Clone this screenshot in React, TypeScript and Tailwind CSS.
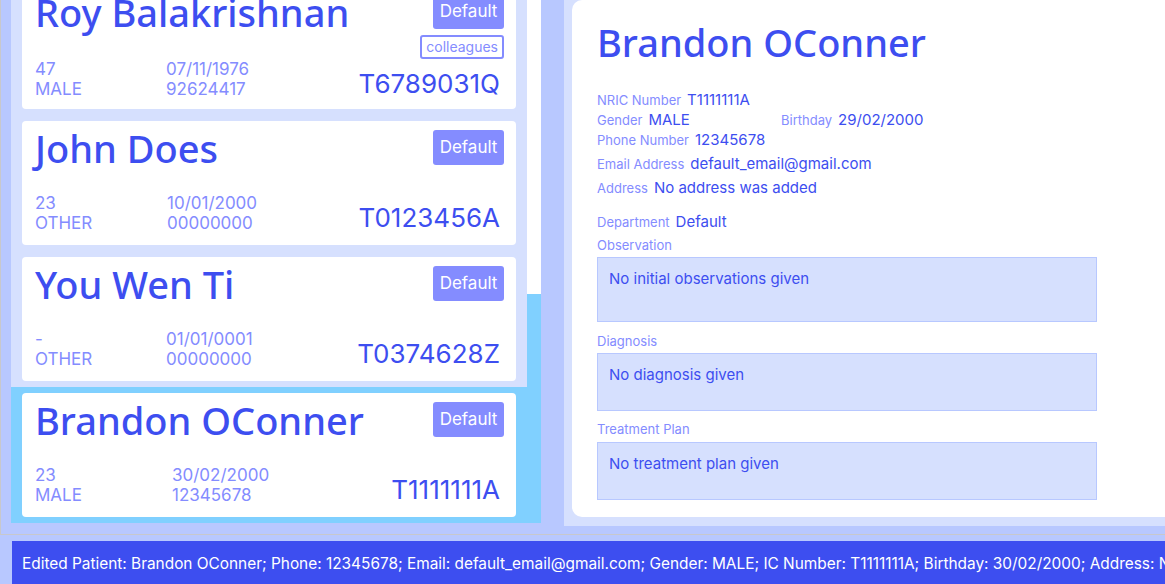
import React from 'react';

interface Patient {
  name: string;
  age: string;
  gender: string;
  birthday: string;
  phone: string;
  nric: string;
  tags: string[];
  colWidth: string;
  selected?: boolean;
}

const patients: Patient[] = [
  { name: 'Roy Balakrishnan', age: '47', gender: 'MALE', birthday: '07/11/1976', phone: '92624417', nric: 'T6789031Q', tags: ['colleagues'], colWidth: 'w-[131px]' },
  { name: 'John Does', age: '23', gender: 'OTHER', birthday: '10/01/2000', phone: '00000000', nric: 'T0123456A', tags: [], colWidth: 'w-[132px]' },
  { name: 'You Wen Ti', age: '-', gender: 'OTHER', birthday: '01/01/0001', phone: '00000000', nric: 'T0374628Z', tags: [], colWidth: 'w-[131px]' },
  { name: 'Brandon OConner', age: '23', gender: 'MALE', birthday: '30/02/2000', phone: '12345678', nric: 'T1111111A', tags: [], colWidth: 'w-[137px]', selected: true },
];

const nameFont = { fontFamily: '"Noto Sans", sans-serif' };
const bodyFont = { fontFamily: 'Inter, Roboto, sans-serif' };

const PatientCard = ({ p }: { p: Patient }) => (
  <div className={`h-[136px] shrink-0 px-[11px] py-[6px] ${p.selected ? 'bg-[#80d0ff]' : ''}`}>
    <div className="h-full bg-white rounded-[4px] flex flex-col pl-[13px]">
      <div className="flex justify-between items-start pr-[12px]">
        <div className="pt-[5px] text-[38px] leading-[44px] font-medium text-[#3d4ef0] whitespace-nowrap" style={nameFont}>
          {p.name}
        </div>
        <div className="flex flex-col items-end">
          <div className="mt-[9px] h-[35px] w-[71px] rounded-[3px] bg-[#848cff] text-white text-[17px] flex items-center justify-center">
            Default
          </div>
          {p.tags.map((t) => (
            <div key={t} className="mt-[6px] h-[24px] px-[4px] border-2 border-[#848cff] rounded-[3px] text-[#848cff] text-[14px] leading-[18px] flex items-center">
              {t}
            </div>
          ))}
        </div>
      </div>
      <div className="mt-auto pb-[12px] pr-[16px] flex items-end text-[#848cff] text-[17px] leading-[20px]">
        <div className={p.colWidth}>
          <div>{p.age}</div>
          <div>{p.gender}</div>
        </div>
        <div>
          <div>{p.birthday}</div>
          <div>{p.phone}</div>
        </div>
        <div className="ml-auto text-[26px] leading-[30px] text-[#3d4ef0]">{p.nric}</div>
      </div>
    </div>
  </div>
);

const Field = ({ label, value, className = '' }: { label: string; value: string; className?: string }) => (
  <div className={`h-[20px] flex items-baseline gap-[6px] ${className}`}>
    <span className="text-[13px] leading-[20px] text-[#848cff]">{label}</span>
    <span className="text-[15px] leading-[20px] text-[#3d4ef0]">{value}</span>
  </div>
);

const NoteBox = ({ text, height }: { text: string; height: string }) => (
  <div className={`w-[500px] ${height} border border-[#b8c8ff] bg-[#d6e0fe] pl-[11px] pt-[11px] text-[15px] leading-[20px] text-[#3d4ef0]`}>
    {text}
  </div>
);

const App = () => {
  return (
    <div className="w-[1165px] h-[584px] overflow-hidden bg-[#b8c8ff] flex flex-col" style={bodyFont}>
      <div className="h-[535px] shrink-0 border-l border-b border-[#c8c8cc] flex">
        <div className="pl-[10px] flex shrink-0">
          <div className="w-[516px] h-[523px] overflow-hidden bg-[#d6e0fe] flex flex-col justify-end">
            {patients.map((p) => (
              <PatientCard key={p.nric} p={p} />
            ))}
          </div>
          <div className="w-[14px] h-[523px] bg-white flex flex-col justify-end">
            <div className="h-[229px] bg-[#80d0ff]" />
          </div>
        </div>
        <div className="ml-[23px] w-[620px] shrink-0 h-[526px] bg-[#d6e0fe] pl-[8px] pb-[9px]">
          <div className="h-full bg-white rounded-[10px] pl-[25px]">
            <div className="pt-[18px] text-[38px] leading-[48px] font-medium text-[#3d4ef0] whitespace-nowrap" style={nameFont}>
              Brandon OConner
            </div>
            <div className="mt-[24px] leading-[20px]">
              <Field label="NRIC Number" value="T1111111A" />
              <div className="flex">
                <Field label="Gender" value="MALE" className="w-[184px]" />
                <Field label="Birthday" value="29/02/2000" />
              </div>
              <Field label="Phone Number" value="12345678" />
              <Field label="Email Address" value="default_email@gmail.com" className="mt-[4px]" />
              <Field label="Address" value="No address was added" className="mt-[4px]" />
              <Field label="Department" value="Default" className="mt-[14px]" />
              <div className="mt-[3px] h-[20px] text-[13px] text-[#848cff]">Observation</div>
              <div className="mt-[2px]">
                <NoteBox text="No initial observations given" height="h-[65px]" />
              </div>
              <div className="mt-[9px] h-[20px] text-[13px] text-[#848cff]">Diagnosis</div>
              <div className="mt-[2px]">
                <NoteBox text="No diagnosis given" height="h-[58px]" />
              </div>
              <div className="mt-[8px] h-[20px] text-[13px] text-[#848cff]">Treatment Plan</div>
              <div className="mt-[3px]">
                <NoteBox text="No treatment plan given" height="h-[58px]" />
              </div>
            </div>
          </div>
        </div>
      </div>
      <div className="mt-[6px] ml-[12px] h-[50px] shrink-0 bg-[#3d4ef0] pl-[10px] flex items-start pt-[11px] text-white text-[15.4px] whitespace-nowrap">
        Edited Patient: Brandon OConner; Phone: 12345678; Email: default_email@gmail.com; Gender: MALE; IC Number: T1111111A; Birthday: 30/02/2000; Address: No address was added; Department: Default
      </div>
    </div>
  );
};

export default App;
